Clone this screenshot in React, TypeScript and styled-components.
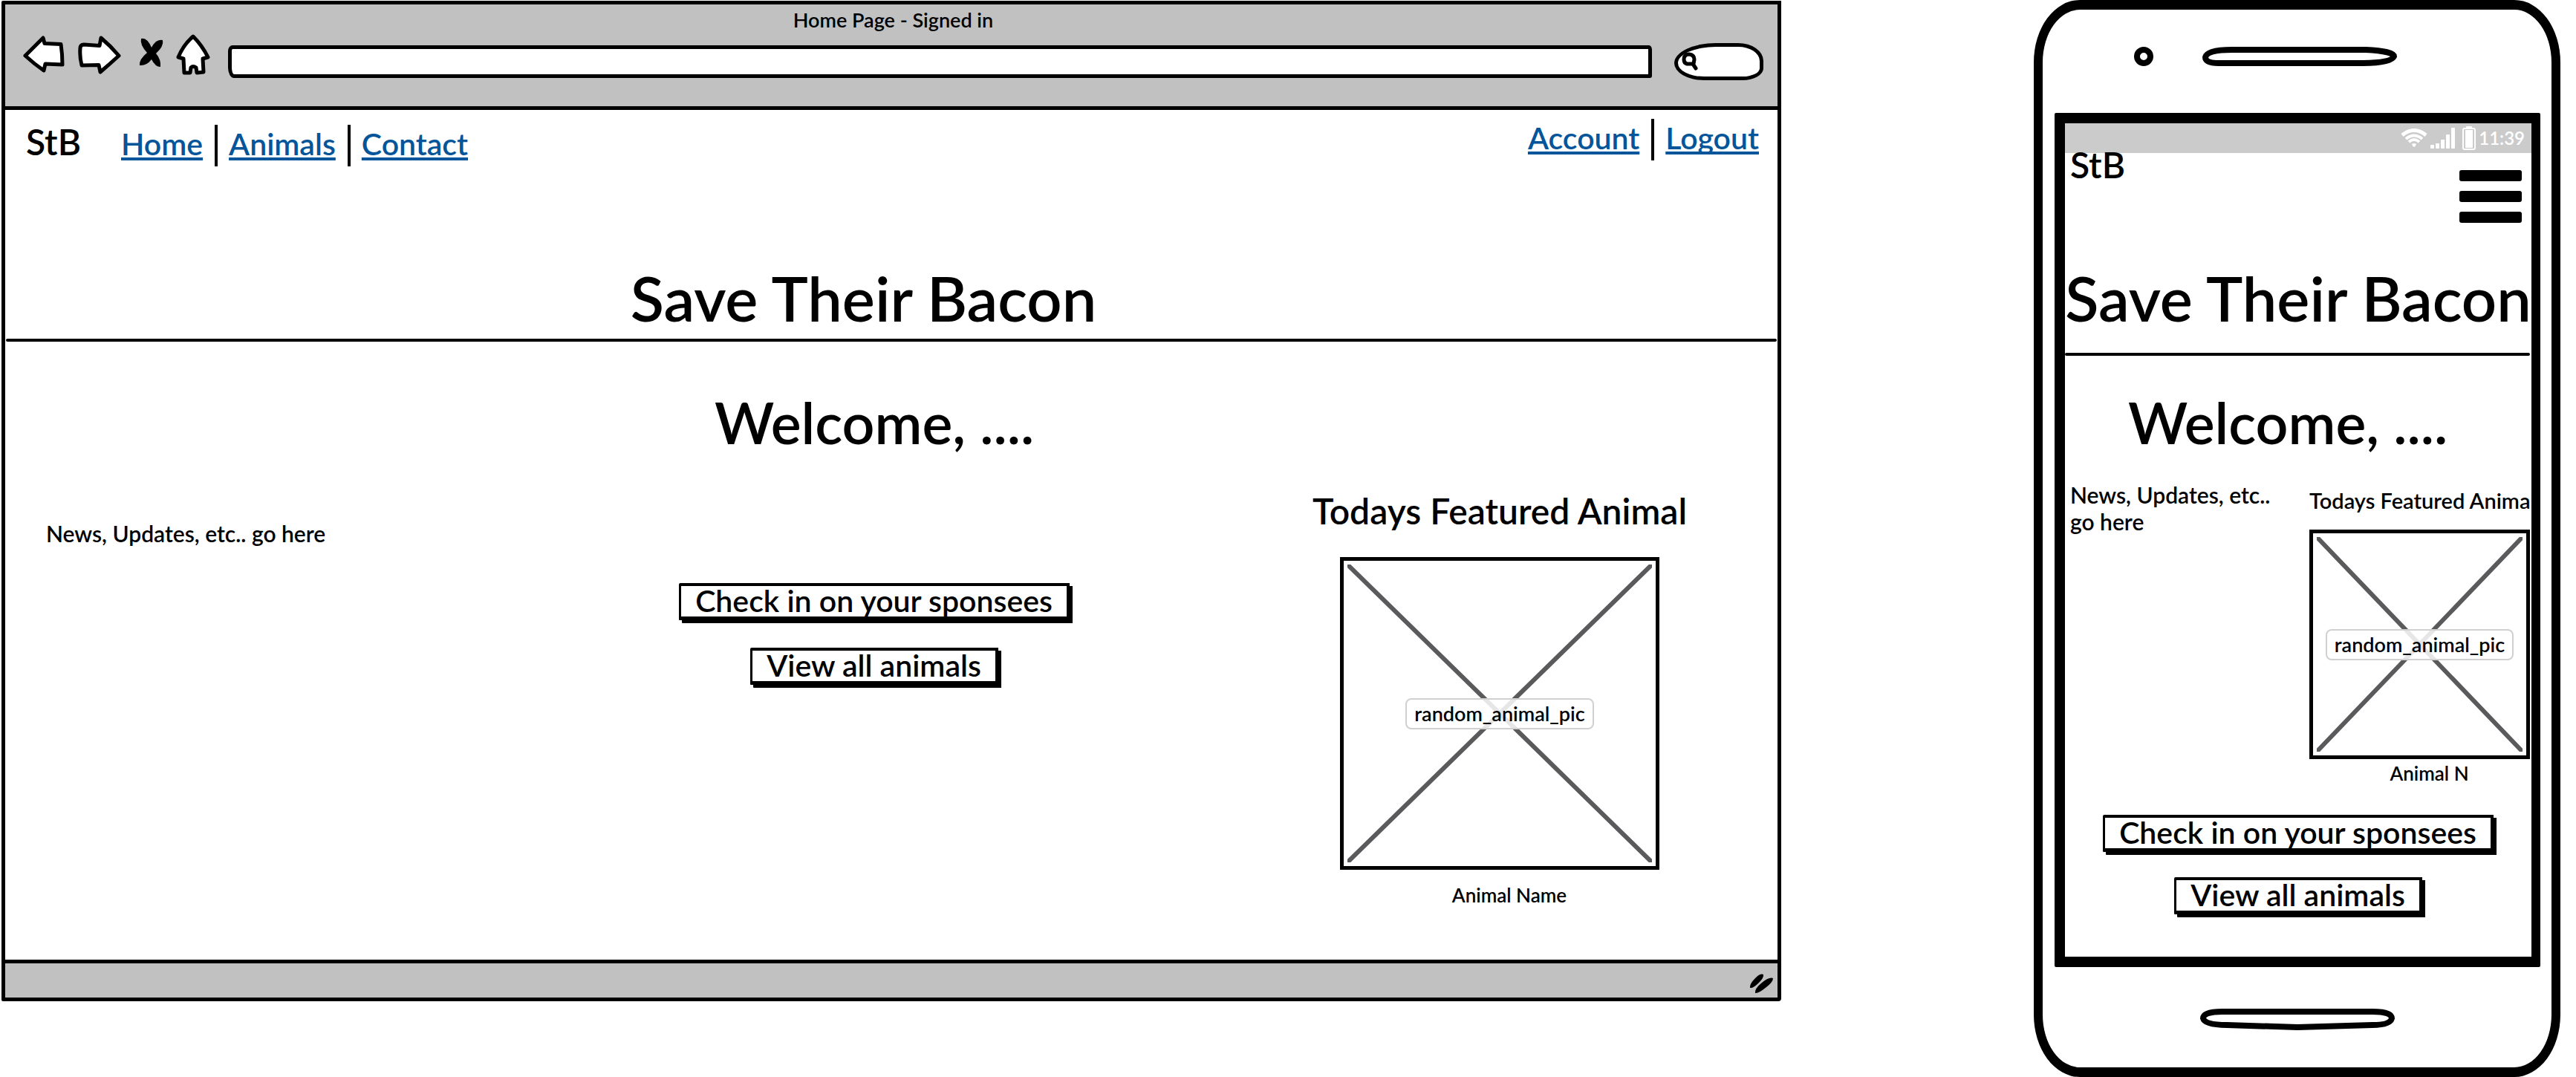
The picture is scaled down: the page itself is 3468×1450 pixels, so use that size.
import React from "react";
import styled, { createGlobalStyle } from "styled-components";

const INK = "#000";
const CHROME = "#c1c1c1";
const LINK = "#045599";

const GlobalStyle = createGlobalStyle`
  * { box-sizing: border-box; }
  body {
    margin: 0;
    background: #fff;
    color: ${INK};
    font-family: Lato, "Open Sans", sans-serif;
    font-weight: 600;
  }
  h1, h2, h3, p, ul, figure, hr { margin: 0; padding: 0; }
  h1, h2, h3 { font-weight: 600; }
  ul { list-style: none; }
  button, input { font: inherit; color: inherit; }
  svg { display: block; }
`;

/* ---------- shared parts ---------- */

const Board = styled.div`
  display: grid;
  grid-template-columns: minmax(0, 2396fr) minmax(0, 709fr);
  column-gap: 340px;
  align-items: start;
  padding: 0 21px 0 2px;
`;

const Brand = styled.span`
  font-size: 48px;
  line-height: 32px;
`;

const PageTitle = styled.h1`
  font-size: 83px;
  line-height: 88px;
  text-align: center;
  white-space: nowrap;
`;

const Welcome = styled.h2`
  font-size: 77px;
  line-height: 88px;
  text-align: center;
`;

const Divider = styled.hr`
  height: 4px;
  border: 0;
  border-radius: 2px;
  background: ${INK};
`;

const News = styled.p`
  font-size: 30px;
  line-height: 36px;
`;

const SketchButton = styled.button`
  padding: 2px 19px 3px;
  border: solid ${INK};
  border-width: 4px 4px 5px 3px;
  border-radius: 2px 0 0 1px;
  background: #fff;
  box-shadow: 4px 4px 0 ${INK};
  font-size: 41px;
  line-height: 36px;
  white-space: nowrap;
`;

const Actions = styled.div<{ $gap: number }>`
  display: flex;
  flex-direction: column;
  align-items: center;
  gap: ${(p) => p.$gap}px;
`;

const PictureFrame = styled.div<{ $height: number }>`
  display: grid;
  place-items: center;
  height: ${(p) => p.$height}px;
  border: 5px solid ${INK};

  > * { grid-area: 1 / 1; }
`;

const Cross = styled.svg`
  width: 100%;
  height: 100%;
  padding: 5px;
`;

const PictureLabel = styled.span`
  padding: 0 10px;
  border: 2px solid #d0d0d0;
  border-radius: 8px;
  background: rgba(255, 255, 255, 0.85);
  font-size: 27px;
  line-height: 38px;
`;

const Caption = styled.figcaption`
  padding-left: 26px;
  font-size: 26px;
  line-height: 32px;
  text-align: center;
`;

function Picture({ height }: { height: number }) {
  return (
    <PictureFrame $height={height}>
      <Cross viewBox="0 0 100 100" preserveAspectRatio="none" aria-hidden="true">
        <path
          d="M0 0 L100 100 M100 0 L0 100"
          stroke="#5a5a5c"
          strokeWidth="6"
          vectorEffect="non-scaling-stroke"
        />
      </Cross>
      <PictureLabel>random_animal_pic</PictureLabel>
    </PictureFrame>
  );
}

/* ---------- browser window ---------- */

const Browser = styled.section`
  margin-top: 1px;
  border: 5px solid ${INK};
  border-radius: 2px 0 4px 2px;
`;

const Chrome = styled.header`
  padding: 5px 19px 35px 24px;
  border-bottom: 5px solid ${INK};
  background: ${CHROME};
`;

const WindowTitle = styled.p`
  font-size: 27px;
  line-height: 32px;
  text-align: center;
`;

const Toolbar = styled.div`
  display: flex;
  align-items: flex-end;
  padding-top: 3px;
`;

const ToolButtons = styled.div`
  display: flex;
  gap: 16px;
  margin-right: 24px;
`;

const ToolButton = styled.button`
  padding: 0;
  border: 0;
  background: none;
`;

const AddressBar = styled.input`
  flex: 1;
  min-width: 0;
  height: 44px;
  margin: 0 30px 3px 0;
  padding: 0 12px;
  border: 5px solid ${INK};
  border-radius: 6px 4px 3px 8px / 8px 6px 3px 14px;
  background: #fff;
  font-size: 26px;
`;

const SearchPill = styled.label`
  display: flex;
  align-items: center;
  width: 120px;
  height: 50px;
  padding-left: 4px;
  border: 5px solid ${INK};
  border-radius: 56px 34px 28px 40px / 27px 24px 16px 23px;
  background: #fff;
`;

const SearchInput = styled.input`
  flex: 1;
  min-width: 0;
  border: 0;
  padding: 0;
  background: transparent;
  font-size: 26px;
  outline: none;
`;

const SiteNav = styled.nav`
  display: flex;
  justify-content: space-between;
  align-items: flex-start;
  padding: 12px 25px 0 28px;
`;

const NavStart = styled.div`
  display: flex;
  align-items: baseline;
  gap: 54px;
  padding-top: 8px;
`;

const LinkList = styled.ul`
  display: flex;
  height: 56px;

  li + li {
    margin-left: 16px;
    padding-left: 15px;
    border-left: 4px solid ${INK};
  }
`;

const NavLink = styled.a`
  color: ${LINK};
  font-size: 41px;
  line-height: 52px;
  text-decoration: underline;
  text-decoration-thickness: 4px;
  text-underline-offset: 3px;
  text-decoration-skip-ink: none;
`;

const Hero = styled.div`
  padding: 133px 75px 11px 0;
`;

const RuleRow = styled.div`
  padding: 0 1px;
`;

const Main = styled.main`
  padding: 64px 101px 71px 55px;
`;

const Columns = styled.div`
  display: grid;
  grid-template-columns: minmax(0, 1fr) auto minmax(0, 1fr);
  align-items: start;
  padding-top: 46px;
`;

const NewsColumn = styled.div`
  padding-top: 42px;
`;

const ActionColumn = styled.div`
  padding-top: 127px;
`;

const Feature = styled.figure`
  justify-self: end;
  width: 546px;
`;

const FeatureTitle = styled.h3`
  font-size: 48px;
  line-height: 60px;
  text-align: center;
`;

const FeaturePicture = styled.div`
  padding: 32px 58px 18px;
`;

const StatusStrip = styled.footer`
  display: flex;
  justify-content: flex-end;
  align-items: flex-end;
  height: 51px;
  padding: 0 4px 5px 0;
  border-top: 5px solid ${INK};
  background: ${CHROME};
`;

function BrowserWindow() {
  const outline = { fill: "#fff", stroke: INK, strokeWidth: 5, strokeLinejoin: "round" as const };
  return (
    <Browser>
      <Chrome>
        <WindowTitle>Home Page - Signed in</WindowTitle>
        <Toolbar>
          <ToolButtons>
            <ToolButton aria-label="Back">
              <svg width="56" height="62" viewBox="31 46 56 62">
                <path {...outline} d="M34 75 Q46 63 58 51 L60 58.5 L82 59.5 Q84 73 84 87 L61 86 L59 95 Q46 86 34 75Z" />
              </svg>
            </ToolButton>
            <ToolButton aria-label="Forward">
              <svg width="60" height="62" viewBox="103 46 60 62">
                <path {...outline} d="M108 65 Q108 60 113 60 L134 61.5 L136 51 Q149 62 160 75 Q148 86 135 97 L133 87.5 L110 88 Q107 76 108 65Z" />
              </svg>
            </ToolButton>
            <ToolButton aria-label="Stop">
              <svg width="42" height="62" viewBox="179 46 42 62">
                <path fill={INK} d="M190 52 Q198 50 204 64 Q210 52 219 54 Q221 62 210 72 Q217 80 216 90 Q209 90 204 80 Q197 89 188 88 Q187 80 198 71 Q188 60 190 52Z" />
              </svg>
            </ToolButton>
            <ToolButton aria-label="Home">
              <svg width="46" height="62" viewBox="237 46 46 62">
                <path {...outline} d="M260 49 Q272 61 280 77 L273 79 L274 97 L265 98 L264 91 Q260 88 257 91 L256 98 L248 98 L247 79 L240 77 Q247 60 260 49Z" />
              </svg>
            </ToolButton>
          </ToolButtons>
          <AddressBar aria-label="Address" type="text" />
          <SearchPill>
            <svg width="24" height="26" viewBox="0 0 24 26" aria-hidden="true">
              <path d="M4 10 Q4 3 11 3 Q18 4 18 10 L17 16 L8 16 Q4 15 4 10Z M16 16 L20 22" fill="none" stroke={INK} strokeWidth="5" strokeLinecap="round" strokeLinejoin="round" />
            </svg>
            <SearchInput aria-label="Search" type="text" />
          </SearchPill>
        </Toolbar>
      </Chrome>

      <SiteNav>
        <NavStart>
          <Brand>StB</Brand>
          <LinkList>
            <li><NavLink href="#home">Home</NavLink></li>
            <li><NavLink href="#animals">Animals</NavLink></li>
            <li><NavLink href="#contact">Contact</NavLink></li>
          </LinkList>
        </NavStart>
        <LinkList>
          <li><NavLink href="#account">Account</NavLink></li>
          <li><NavLink href="#logout">Logout</NavLink></li>
        </LinkList>
      </SiteNav>

      <Hero>
        <PageTitle>Save Their Bacon</PageTitle>
      </Hero>
      <RuleRow>
        <Divider />
      </RuleRow>

      <Main>
        <Welcome>Welcome, ....</Welcome>
        <Columns>
          <NewsColumn>
            <News>News, Updates, etc.. go here</News>
          </NewsColumn>
          <ActionColumn>
            <Actions $gap={37}>
              <SketchButton>Check in on your sponsees</SketchButton>
              <SketchButton>View all animals</SketchButton>
            </Actions>
          </ActionColumn>
          <Feature>
            <FeatureTitle>Todays Featured Animal</FeatureTitle>
            <FeaturePicture>
              <Picture height={421} />
            </FeaturePicture>
            <Caption>Animal Name</Caption>
          </Feature>
        </Columns>
      </Main>

      <StatusStrip>
        <svg width="34" height="28" viewBox="0 0 34 28" aria-hidden="true">
          <path fill={INK} d="M1 20 Q0 15 8 7 Q15 0 19 2 Q20 6 13 13 Q5 21 1 20Z M8 27 Q7 21 17 13 Q27 5 32 7 Q32 12 23 19 Q12 28 8 27Z" />
        </svg>
      </StatusStrip>
    </Browser>
  );
}

/* ---------- phone ---------- */

const Phone = styled.section`
  padding: 0 15px 0 16px;
  border: solid ${INK};
  border-width: 13px 12px;
  border-radius: 62px / 84px;
`;

const Earpiece = styled.div`
  display: flex;
  align-items: center;
  gap: 66px;
  padding: 50px 0 63px 107px;
`;

const Chin = styled.div`
  display: flex;
  justify-content: center;
  padding: 55px 0 50px;
`;

const HomeKey = styled.button`
  padding: 0;
  border: 0;
  background: none;
`;

const Screen = styled.div`
  overflow: hidden;
  padding-bottom: 57px;
  border: solid ${INK};
  border-width: 14px 12px 14px 14px;
  border-radius: 2px;
`;

const PhoneStatus = styled.div`
  display: flex;
  justify-content: flex-end;
  align-items: center;
  gap: 4px;
  height: 40px;
  padding-right: 9px;
  background: #cbcbcb;
  color: #fff;
  font-size: 24px;
  line-height: 32px;
`;

const PhoneHeader = styled.header`
  display: flex;
  justify-content: space-between;
  align-items: flex-start;
  padding: 0 13px 57px 7px;
`;

const MenuButton = styled.button`
  display: flex;
  flex-direction: column;
  gap: 13px;
  width: 84px;
  padding: 23px 0 0;
  border: 0;
  background: none;
`;

const MenuBar = styled.span`
  height: 15px;
  border-radius: 3px;
  background: ${INK};
`;

const PhoneRule = styled.div`
  padding: 30px 2px 45px 0;
`;

const PhoneWelcome = styled.div`
  padding: 0 28px 36px 0;
`;

const PhoneColumns = styled.div`
  display: grid;
  grid-template-columns: minmax(0, 290px) minmax(0, 1fr);
  column-gap: 32px;
  align-items: start;
  padding: 0 2px 40px 7px;
`;

const PhoneFeature = styled.figure`
  padding-top: 8px;
`;

const PhoneFeatureTitle = styled.h3`
  font-size: 29px;
  line-height: 36px;
  white-space: nowrap;
`;

const PhonePicture = styled.div`
  padding: 21px 0 3px;
`;

function PhoneMockup() {
  return (
    <Phone>
      <Earpiece aria-hidden="true">
        <svg width="26" height="26" viewBox="0 0 26 26">
          <ellipse cx="13" cy="13" rx="9" ry="9" fill="#fff" stroke={INK} strokeWidth="8" />
        </svg>
        <svg width="262" height="26" viewBox="0 0 262 26">
          <path d="M22 22 Q4 22 4 14 Q6 4 40 4 L220 4 Q258 6 258 13 Q254 22 216 22Z" fill="#fff" stroke={INK} strokeWidth="8" strokeLinejoin="round" />
        </svg>
      </Earpiece>

      <Screen>
        <PhoneStatus>
          <svg width="36" height="26" viewBox="0 0 36 26" aria-hidden="true">
            <g fill="none" stroke="#fff">
              <path d="M2 9 Q18 -4 34 9" strokeWidth="5" />
              <path d="M7 14 Q18 5 29 14" strokeWidth="4" />
              <path d="M11 18 Q18 12 25 18" strokeWidth="4" />
            </g>
            <path d="M15 21 Q18 19 21 21 Q20 24 18 25 Q16 24 15 21Z" fill="#fff" />
          </svg>
          <svg width="39" height="28" viewBox="0 0 39 28" fill="#fff" aria-hidden="true">
            <rect x="0" y="23" width="5" height="5" rx="1" />
            <rect x="7" y="21" width="5" height="7" rx="1" />
            <rect x="14" y="16" width="5" height="12" rx="1" />
            <rect x="21" y="9" width="5" height="19" rx="1" />
            <rect x="28" y="0" width="5" height="28" rx="1" />
          </svg>
          <svg width="18" height="32" viewBox="0 0 18 32" aria-hidden="true">
            <rect x="5" y="0" width="8" height="4" rx="1" fill="#fff" />
            <rect x="1" y="3" width="16" height="28" rx="2" fill="none" stroke="#fff" strokeWidth="2" />
            <rect x="4" y="5" width="10" height="24" fill="#fff" />
          </svg>
          <span>11:39</span>
        </PhoneStatus>

        <PhoneHeader>
          <Brand>StB</Brand>
          <MenuButton aria-label="Menu">
            <MenuBar />
            <MenuBar />
            <MenuBar />
          </MenuButton>
        </PhoneHeader>

        <PageTitle as="h2">Save Their Bacon</PageTitle>
        <PhoneRule>
          <Divider />
        </PhoneRule>
        <PhoneWelcome>
          <Welcome>Welcome, ....</Welcome>
        </PhoneWelcome>

        <PhoneColumns>
          <News>News, Updates, etc.. go here</News>
          <PhoneFeature>
            <PhoneFeatureTitle>Todays Featured Animal</PhoneFeatureTitle>
            <PhonePicture>
              <Picture height={309} />
            </PhonePicture>
            <Caption>Animal N</Caption>
          </PhoneFeature>
        </PhoneColumns>

        <Actions $gap={34}>
          <SketchButton>Check in on your sponsees</SketchButton>
          <SketchButton>View all animals</SketchButton>
        </Actions>
      </Screen>

      <Chin>
        <HomeKey aria-label="Home key">
          <svg width="262" height="30" viewBox="0 0 262 30">
            <path d="M30 5 L232 5 Q258 5 258 14 Q256 23 232 23 L131 26 L36 23 Q6 23 4 14 Q4 5 30 5Z" fill="#fff" stroke={INK} strokeWidth="8" strokeLinejoin="round" />
          </svg>
        </HomeKey>
      </Chin>
    </Phone>
  );
}

export default function App() {
  return (
    <>
      <GlobalStyle />
      <Board>
        <BrowserWindow />
        <PhoneMockup />
      </Board>
    </>
  );
}
